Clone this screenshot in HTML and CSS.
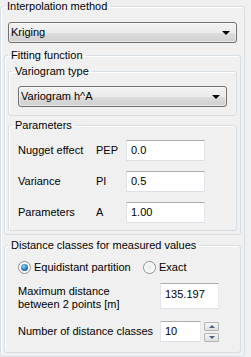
FILE: index.html
```html
<!DOCTYPE html>
<html lang="en">
<head>
    <meta charset="UTF-8">
    <meta name="viewport" content="width=device-width, initial-scale=1.0">
    <title>Interpolation settings</title>
    <link rel="stylesheet" href="styles.css">
</head>
<body>
    <fieldset class="group outer">
        <legend>Interpolation method</legend>
        <div class="combo combo-method"><span>Kriging</span><i class="arrow"></i></div>

        <fieldset class="group fit">
            <legend>Fitting function</legend>

            <fieldset class="group inner">
                <legend>Variogram type</legend>
                <div class="combo combo-vario"><span>Variogram h^A</span><i class="arrow"></i></div>
            </fieldset>

            <fieldset class="group inner params-box">
                <legend>Parameters</legend>
                <div class="params">
                    <span>Nugget effect</span><span>PEP</span><div class="field">0.0</div>
                    <span>Variance</span><span>PI</span><div class="field">0.5</div>
                    <span>Parameters</span><span>A</span><div class="field">1.00</div>
                </div>
            </fieldset>
        </fieldset>

        <fieldset class="group dist">
            <legend>Distance classes for measured values</legend>
            <div class="radios">
                <label class="radio radio-first"><i class="dot checked"></i>Equidistant partition</label>
                <label class="radio"><i class="dot"></i>Exact</label>
            </div>
            <div class="row row-max">
                <span class="row-label">Maximum distance<br>between 2 points [m]</span>
                <div class="field field-max">135.197</div>
            </div>
            <div class="row row-count">
                <span class="row-label">Number of distance classes</span>
                <div class="field field-count">10</div>
                <div class="spin">
                    <button class="spin-btn"><i class="up"></i></button>
                    <button class="spin-btn"><i class="down"></i></button>
                </div>
            </div>
        </fieldset>
    </fieldset>
</body>
</html>
```

FILE: styles.css
```css
body {
    margin: 0;
    background: #f0f0f0;
    font-family: "Liberation Sans", Arial, sans-serif;
    font-size: 11px;
    line-height: 13px;
    color: #000;
    overflow: hidden;
}
.group {
    margin: 0;
    padding: 0 3px 3px;
    border: 1px solid #d5dfe5;
    border-radius: 3px;
    box-shadow: inset 1px 1px 0 #fff;
    min-inline-size: 0;
}
.group legend {
    padding: 0 3px;
    line-height: 13px;
}
.outer {
    width: 245px;
    box-sizing: border-box;
}
.fit {
    margin-top: 6px;
}
.inner {
    margin-top: 3px;
}
.dist {
    margin-top: 4px;
    padding: 0 3px 10px;
}

/* combo boxes */
.combo {
    height: 21px;
    box-sizing: border-box;
    border: 1px solid #707070;
    border-radius: 3px;
    background: linear-gradient(#f2f2f2 0%, #ebebeb 50%, #dddddd 51%, #cfcfcf 100%);
    display: flex;
    align-items: center;
    padding: 0 2px;
    box-shadow: inset 0 0 0 1px rgba(255,255,255,0.5);
}
.combo span {
    flex: 1;
}
.combo .arrow {
    width: 0;
    height: 0;
    border-left: 4px solid transparent;
    border-right: 4px solid transparent;
    border-top: 4px solid #000;
    margin-right: 4px;
}
.combo-method {
    margin: 9px 4px 0;
}
.combo-vario {
    margin: 8px 6px 5px;
}

/* text fields */
.field {
    height: 21px;
    box-sizing: border-box;
    background: #fff;
    border: 1px solid #e3e9ef;
    border-top-color: #abadb3;
    border-left-color: #e2e3ea;
    border-bottom-color: #dbdfe6;
    padding: 0 4px;
    display: flex;
    align-items: center;
}

.params {
    display: grid;
    grid-template-columns: 78px 30px 79px;
    row-gap: 10px;
    align-items: center;
    margin: 8px 0 4px 6px;
}

/* radios */
.radios {
    display: flex;
    margin: 9px 0 0 10px;
}
.radio {
    display: flex;
    align-items: center;
    gap: 3px;
}
.radio-first {
    width: 125px;
}
.dot {
    width: 13px;
    height: 13px;
    box-sizing: border-box;
    border-radius: 50%;
    border: 1px solid #8e8f8f;
    background: radial-gradient(circle at 50% 50%, #e6e6e6 0%, #fbfbfb 60%, #f4f4f4 100%);
    display: flex;
    align-items: center;
    justify-content: center;
}
.dot.checked::after {
    content: "";
    width: 7px;
    height: 7px;
    border-radius: 50%;
    background: radial-gradient(circle at 40% 35%, #8ed1f5 0%, #2c7ac2 55%, #153e73 100%);
}

/* rows */
.row {
    display: flex;
    align-items: center;
    padding-left: 10px;
}
.row-label {
    width: 142px;
}
.row-max {
    margin-top: 9px;
    align-items: flex-start;
}
.row-max .row-label {
    margin-top: 2px;
}
.field-max {
    width: 59px;
    height: 26px;
    align-items: flex-start;
    padding-top: 4px;
}
.row-count {
    margin-top: 10px;
}
.field-count {
    width: 41px;
}
.spin {
    display: flex;
    flex-direction: column;
    gap: 2px;
    margin-left: 3px;
}
.spin-btn {
    width: 15px;
    height: 9px;
    padding: 0;
    border: 1px solid #b4b4b4;
    border-radius: 1px;
    background: linear-gradient(#f6f6f6, #dedede);
    display: flex;
    align-items: center;
    justify-content: center;
}
.spin-btn .up,
.spin-btn .down {
    width: 0;
    height: 0;
    border-left: 3px solid transparent;
    border-right: 3px solid transparent;
}
.spin-btn .up {
    border-bottom: 3px solid #4c607e;
}
.spin-btn .down {
    border-top: 3px solid #4c607e;
}
```
